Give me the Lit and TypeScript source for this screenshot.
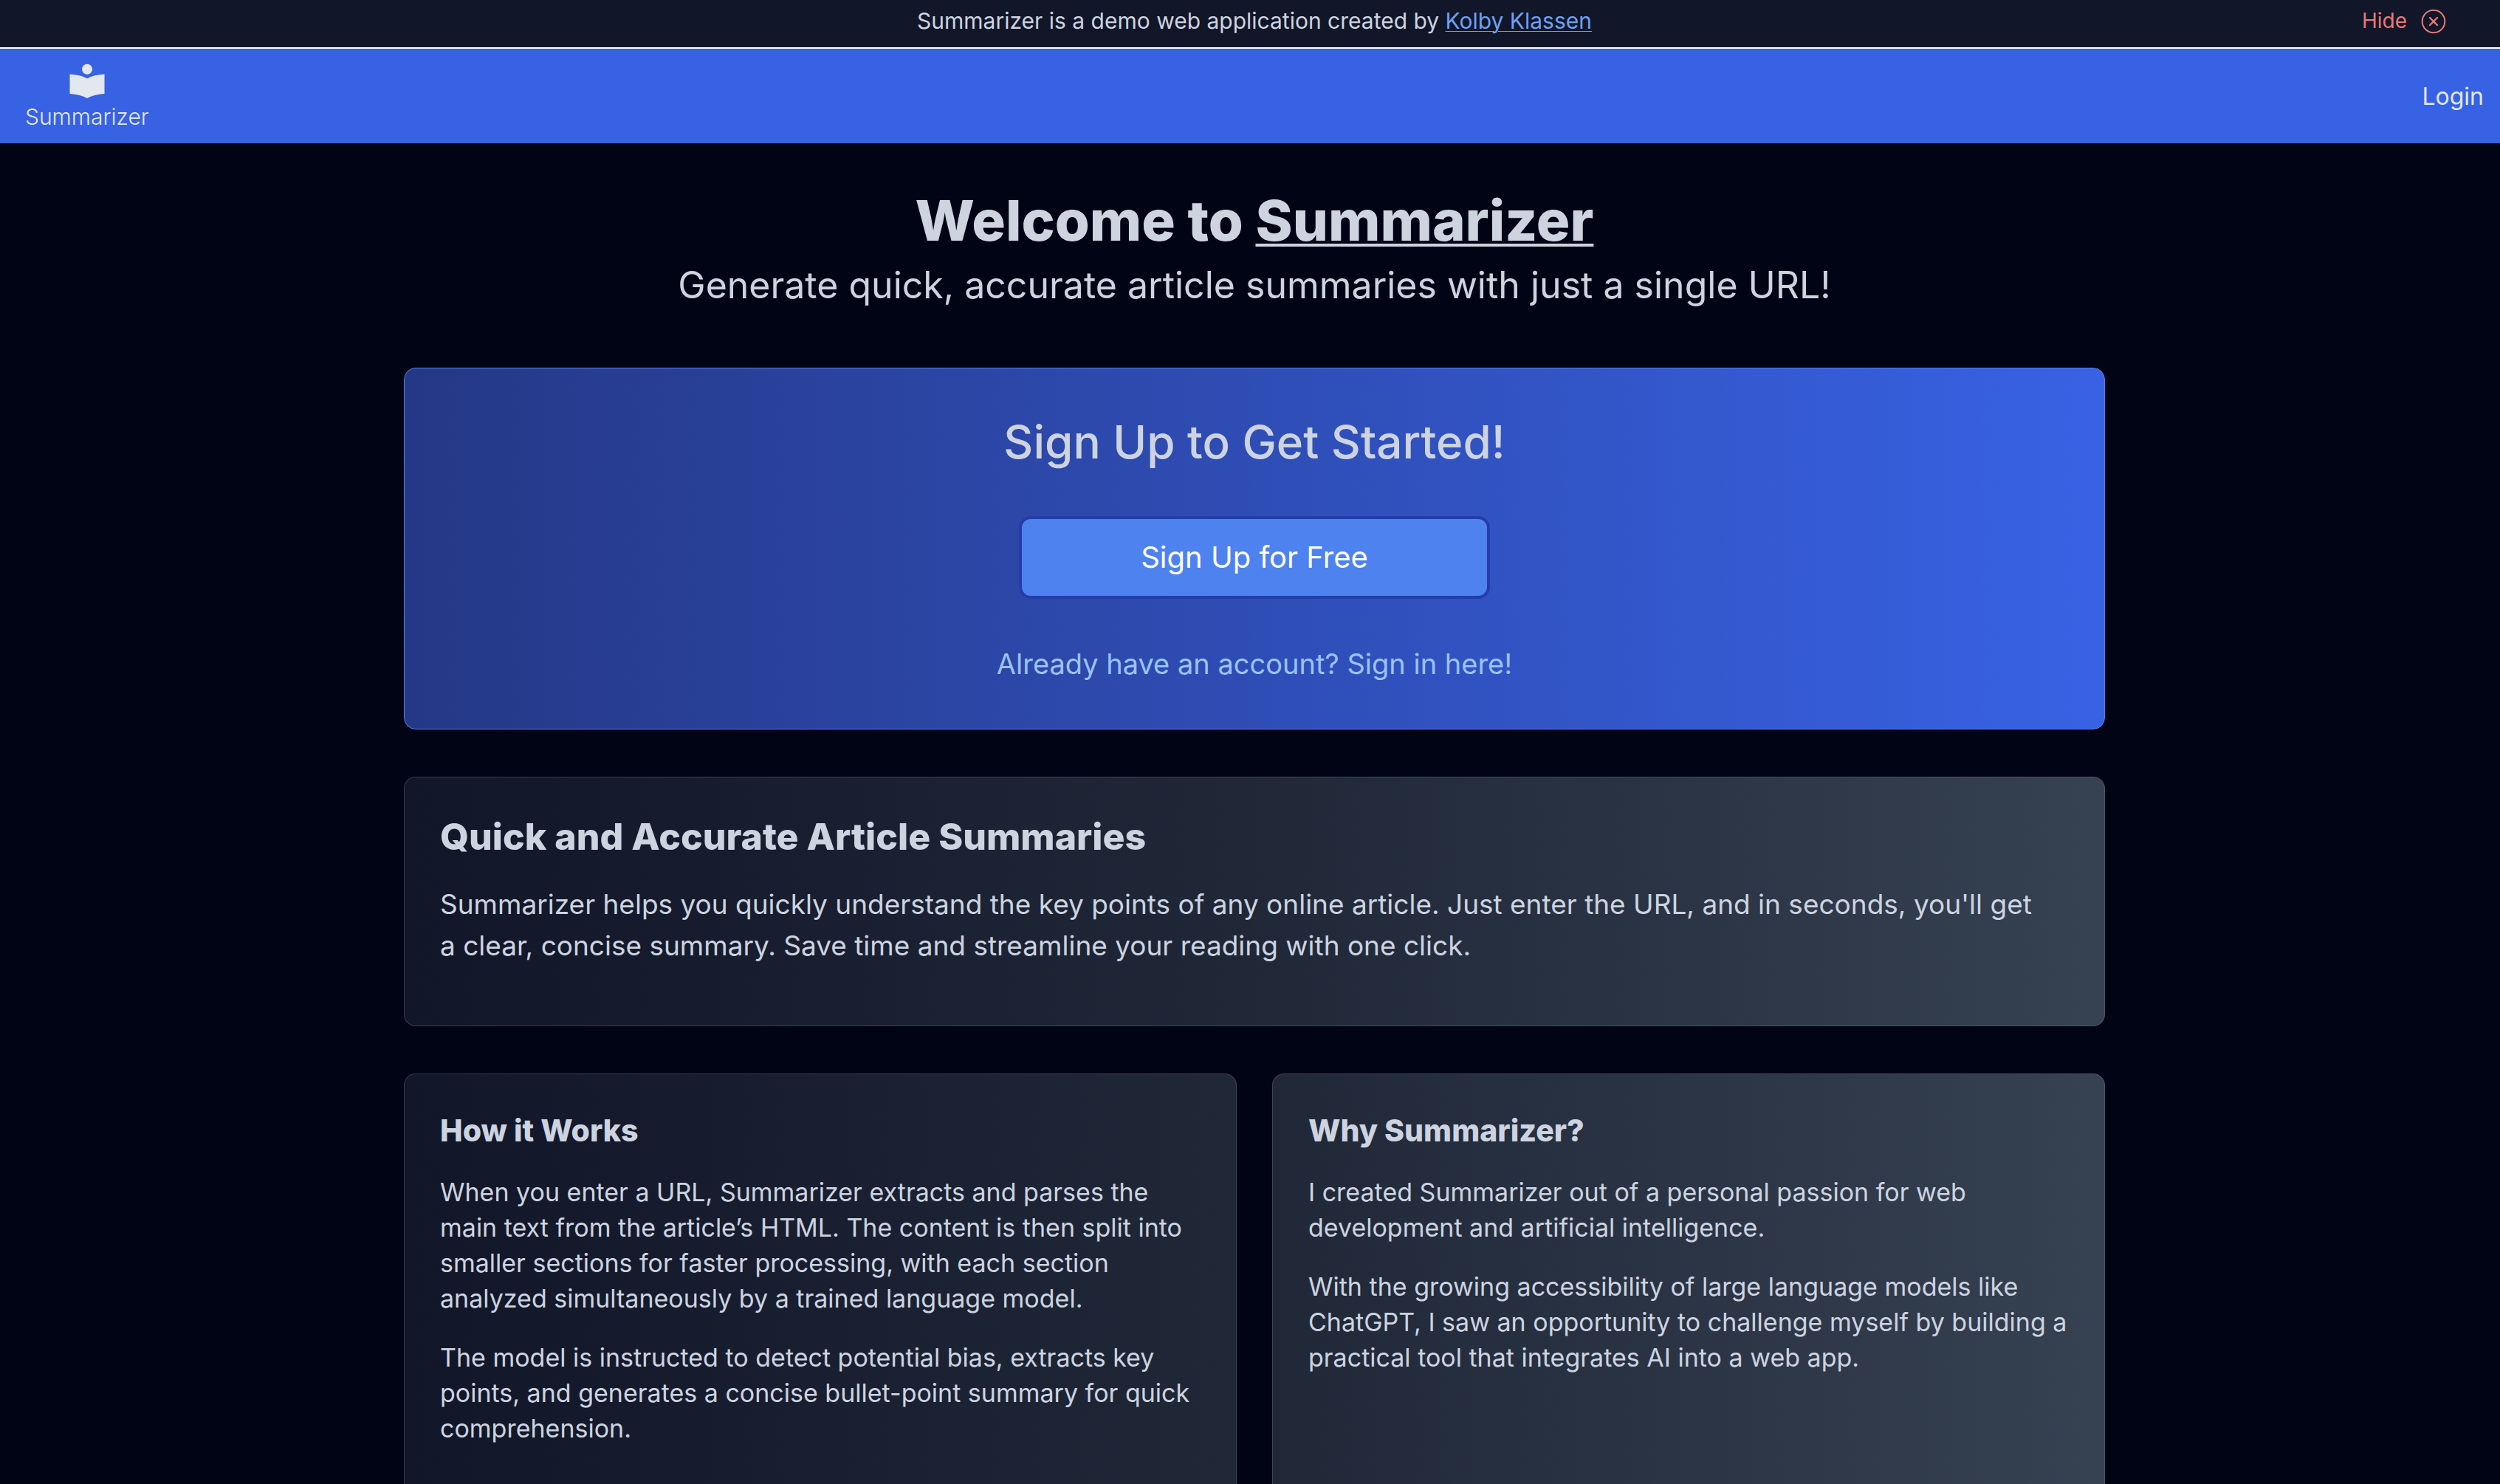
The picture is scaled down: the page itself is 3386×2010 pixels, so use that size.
import { LitElement, html, css, nothing } from "lit";
import { customElement, property, state } from "lit/decorators.js";

const palette = css`
  :host {
    --page: #010414;
    --panel: #111628;
    --panel-mid: #202838;
    --panel-end: #364152;
    --panel-border: rgba(120, 130, 150, 0.35);
    --brand: #3862e4;
    --brand-deep: #253886;
    --brand-light: #4e82ee;
    --brand-edge: #253da8;
    --text: #cdd4e0;
    --text-bright: #e3e7ee;
    --link: #6da1f3;
    --link-soft: #9bc3f9;
    --danger: #e87876;
  }
`;

@customElement("demo-banner")
export class DemoBanner extends LitElement {
  static styles = css`
    :host {
      display: block;
    }
    .banner {
      display: grid;
      grid-template-columns: 1fr auto 1fr;
      align-items: center;
      padding: 8px 70px 16px 82px;
      background: var(--panel);
      border-bottom: 2px solid #ffffff;
      color: var(--text);
      font-size: 30px;
      line-height: 40px;
    }
    .message {
      grid-column: 2;
      margin: 0;
    }
    .author {
      color: var(--link);
      text-decoration: underline;
      text-decoration-thickness: 1px;
      text-underline-offset: 3px;
    }
    .hide {
      display: flex;
      align-items: center;
      gap: 16px;
      justify-self: end;
      margin: 0;
      padding: 0;
      border: 0;
      background: none;
      color: var(--danger);
      font: inherit;
      font-size: 28px;
      cursor: pointer;
    }
    .hide-icon {
      display: block;
      width: 40px;
      height: 40px;
    }
  `;

  private hide() {
    this.dispatchEvent(new CustomEvent("banner-hide"));
  }

  render() {
    return html`
      <div class="banner">
        <p class="message">
          Summarizer is a demo web application created by
          <a class="author" href="#author">Kolby Klassen</a>
        </p>
        <button class="hide" type="button" @click=${this.hide}>
          Hide
          <svg class="hide-icon" viewBox="0 0 40 40" fill="none" stroke="currentColor" aria-hidden="true">
            <circle cx="20" cy="21" r="15.3" stroke-width="2"></circle>
            <path d="M15 16 25 26M25 16 15 26" stroke-width="2.4" stroke-linecap="round"></path>
          </svg>
        </button>
      </div>
    `;
  }
}

@customElement("nav-bar")
export class NavBar extends LitElement {
  static styles = css`
    :host {
      display: block;
    }
    .nav {
      display: flex;
      align-items: center;
      justify-content: space-between;
      padding: 20px 22px 18px 34px;
      background: var(--brand);
      color: var(--text-bright);
    }
    .logo {
      display: flex;
      flex-direction: column;
      align-items: center;
      gap: 6px;
      color: inherit;
      font-size: 30px;
      font-weight: 300;
      line-height: 36px;
      text-decoration: none;
    }
    .logo-icon {
      display: block;
      width: 48px;
      height: 48px;
    }
    .login {
      color: inherit;
      font-size: 32px;
      line-height: 48px;
      text-decoration: none;
    }
  `;

  render() {
    return html`
      <nav class="nav">
        <a class="logo" href="#home">
          <svg class="logo-icon" viewBox="0 0 48 48" fill="currentColor" aria-hidden="true">
            <circle cx="24" cy="7.8" r="7"></circle>
            <path d="M.5 14.5C10 15 18 17 24 20.3 30 17 38 15 47.5 14.5V41C38 41.6 30 43.5 24 47 18 43.5 10 41.6.5 41Z"></path>
          </svg>
          Summarizer
        </a>
        <a class="login" href="#login">Login</a>
      </nav>
    `;
  }
}

@customElement("info-card")
export class InfoCard extends LitElement {
  @property() heading = "";
  @property({ attribute: false }) paragraphs: string[] = [];
  @property({ reflect: true }) tone: "wide" | "left" | "right" = "wide";

  static styles = css`
    :host {
      display: grid;
      --from: var(--panel);
      --to: var(--panel-mid);
    }
    :host([tone="right"]) {
      --from: var(--panel-mid);
      --to: var(--panel-end);
    }
    .card {
      padding: 48px;
      border: 1px solid var(--panel-border);
      border-radius: 16px;
      background: linear-gradient(to right, var(--from), var(--to)) border-box;
    }
    .card.wide {
      background: linear-gradient(to right, var(--panel), var(--panel-mid), var(--panel-end)) border-box;
    }
    .heading {
      margin: 0 0 32px;
      font-size: 41px;
      font-weight: 800;
      line-height: 56px;
    }
    .wide .heading {
      font-size: 50px;
      line-height: 64px;
    }
    .text {
      margin: 0 0 32px;
      font-size: 34px;
      line-height: 48px;
    }
    .wide .text {
      font-size: 37px;
      line-height: 56px;
    }
  `;

  render() {
    return html`
      <section class="card ${this.tone}">
        <h2 class="heading">${this.heading}</h2>
        ${this.paragraphs.map((text) => html`<p class="text">${text}</p>`)}
      </section>
    `;
  }
}

@customElement("app-root")
export class AppRoot extends LitElement {
  @state() private bannerVisible = true;

  static styles = [
    palette,
    css`
      :host {
        display: block;
        height: 100vh;
        overflow-y: auto;
        scrollbar-width: none;
        background: var(--page);
        color: var(--text);
        font-family: Inter, "Open Sans", sans-serif;
        font-size: 32px;
      }
      .page {
        padding: 64px 0 64px 12px;
      }
      .content {
        display: grid;
        gap: 64px;
        max-width: 2304px;
        margin: 0 auto;
      }
      .intro {
        margin-bottom: 16px;
        text-align: center;
      }
      .title {
        margin: 0 0 16px;
        font-size: 76px;
        font-weight: 800;
        line-height: 80px;
      }
      .name {
        text-decoration: underline;
        text-decoration-thickness: 4px;
        text-underline-offset: 4px;
      }
      .subtitle {
        margin: 0;
        font-size: 50px;
        line-height: 64px;
      }
      .signup {
        display: flex;
        flex-direction: column;
        align-items: center;
        gap: 64px;
        padding: 64px 48px;
        border: 1px solid var(--brand-light);
        border-radius: 16px;
        background: linear-gradient(to right, var(--brand-deep), var(--brand));
      }
      .signup-title {
        margin: 0;
        font-size: 62px;
        font-weight: 500;
        line-height: 72px;
      }
      .signup-button {
        width: 638px;
        max-width: 100%;
        padding: 24px;
        border: 4px solid var(--brand-edge);
        border-radius: 16px;
        background: var(--brand-light);
        color: #ffffff;
        font: inherit;
        font-size: 40px;
        line-height: 56px;
        cursor: pointer;
      }
      .signin {
        color: var(--link-soft);
        font-size: 38px;
        line-height: 48px;
        text-decoration: none;
      }
      .columns {
        display: grid;
        grid-template-columns: 1fr 1fr;
        gap: 48px;
      }
    `,
  ];

  render() {
    return html`
      ${this.bannerVisible
        ? html`<demo-banner @banner-hide=${() => (this.bannerVisible = false)}></demo-banner>`
        : nothing}
      <nav-bar></nav-bar>
      <main class="page">
        <div class="content">
          <header class="intro">
            <h1 class="title">Welcome to <span class="name">Summarizer</span></h1>
            <p class="subtitle">Generate quick, accurate article summaries with just a single URL!</p>
          </header>
          <section class="signup">
            <h2 class="signup-title">Sign Up to Get Started!</h2>
            <button class="signup-button" type="button">Sign Up for Free</button>
            <a class="signin" href="#signin">Already have an account? Sign in here!</a>
          </section>
          <info-card
            tone="wide"
            heading="Quick and Accurate Article Summaries"
            .paragraphs=${[
              "Summarizer helps you quickly understand the key points of any online article. Just enter the URL, and in seconds, you'll get a\u00a0clear, concise summary. Save time and streamline your reading with one click.",
            ]}
          ></info-card>
          <div class="columns">
            <info-card
              tone="left"
              heading="How it Works"
              .paragraphs=${[
                "When you enter a URL, Summarizer extracts and parses the main text from the article’s HTML. The content is then split into smaller sections for faster processing, with each section analyzed simultaneously by a trained language model.",
                "The model is instructed to detect potential bias, extracts key points, and generates a concise bullet-point summary for quick comprehension.",
              ]}
            ></info-card>
            <info-card
              tone="right"
              heading="Why Summarizer?"
              .paragraphs=${[
                "I created Summarizer out of a personal passion for web development and artificial intelligence.",
                "With the growing accessibility of large language models like ChatGPT, I saw an opportunity to challenge myself by building a practical tool that integrates AI into a web app.",
              ]}
            ></info-card>
          </div>
        </div>
      </main>
    `;
  }
}
